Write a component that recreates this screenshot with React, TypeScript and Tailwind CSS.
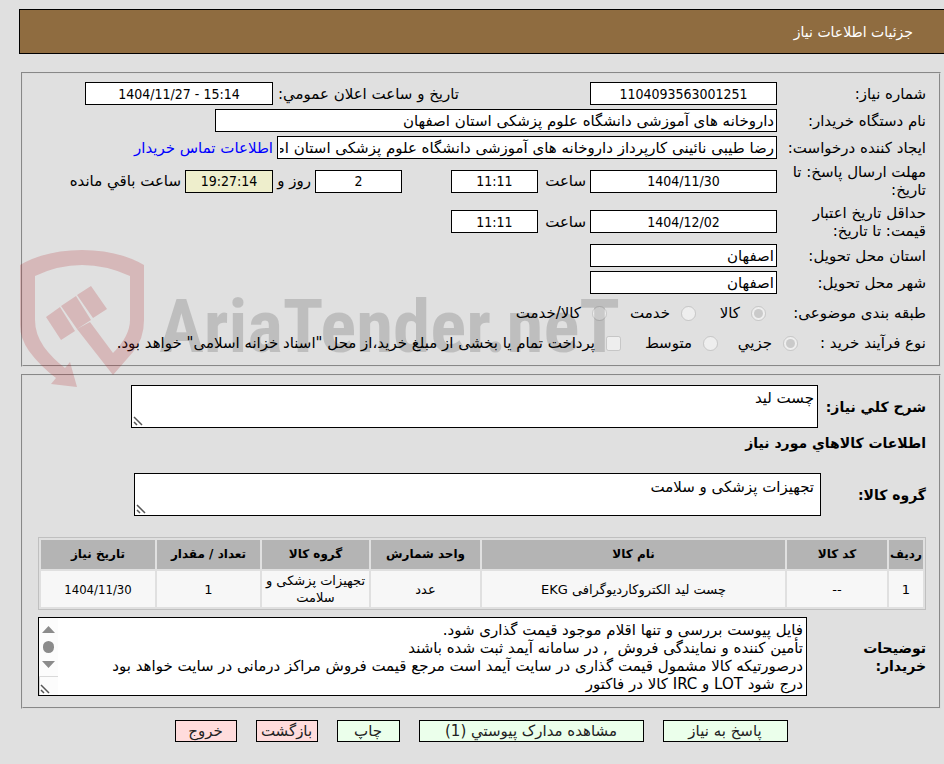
import type { ComponentProps, ReactNode } from "react";

const numeric = "font-['DejaVu_Sans_Condensed','DejaVu_Sans',sans-serif] text-[14px] text-center";

function Field({ className = "", ...props }: ComponentProps<"input">) {
  return (
    <input
      type="text"
      readOnly
      className={`h-[23px] shrink-0 border border-black px-[2px] leading-[18px] text-black outline-none ${className}`}
      {...props}
    />
  );
}

function Row({ id, label, className = "h-[27px]", children }: { id?: string; label: string; className?: string; children: ReactNode }) {
  return (
    <div className={`flex items-center ${className}`}>
      <label htmlFor={id} className="w-[149px] shrink-0 pe-2">
        {label}
      </label>
      {children}
    </div>
  );
}

function Choice({ label, className = "", ...props }: ComponentProps<"input"> & { label: string }) {
  return (
    <label className={`flex shrink-0 items-center gap-[11px] whitespace-nowrap ${className}`}>
      <input disabled className="m-0 size-[15px] shrink-0" {...props} />
      {label}
    </label>
  );
}

const panel = "min-w-0 border-2 border-[#dcdcdc] [border-style:groove]";

const columns = [
  { title: "ردیف", value: "1", width: "w-[34px]", cell: "" },
  { title: "کد کالا", value: "--", width: "w-[100px]", cell: "" },
  { title: "نام کالا", value: "چست لید الکتروکاردیوگرافی EKG", width: "", cell: "" },
  { title: "واحد شمارش", value: "عدد", width: "w-[109px]", cell: "" },
  { title: "گروه کالا", value: "تجهیزات پزشکی و سلامت", width: "w-[107px]", cell: "" },
  { title: "تعداد / مقدار", value: "1", width: "w-[103px]", cell: "" },
  { title: "تاریخ نیاز", value: "1404/11/30", width: "w-[114px]", cell: "font-['DejaVu_Sans_Condensed','DejaVu_Sans',sans-serif]" },
];

const notes = `فایل پیوست بررسی و تنها اقلام موجود قیمت گذاری شود.
تأمین کننده و نمایندگی فروش  , در سامانه آیمد ثبت شده باشند
درصورتیکه کالا مشمول قیمت گذاری در سایت آیمد است مرجع قیمت فروش مراکز درمانی در سایت خواهد بود
درج شود LOT و IRC کالا در فاکتور`;

const actions = [
  { label: "پاسخ به نياز", style: "w-[125px] bg-[#ebffeb]" },
  { label: "مشاهده مدارک پيوستي (1)", style: "w-[225px] bg-[#ebffeb]" },
  { label: "چاپ", style: "w-[63px] bg-[#ebffeb]" },
  { label: "بازگشت", style: "w-[62px] bg-[#ffdcdc]" },
  { label: "خروج", style: "w-[62px] bg-[#ffdcdc]" },
];

function Grip() {
  return (
    <svg className="pointer-events-none absolute bottom-[2px] left-[2px]" width="10" height="10" viewBox="0 0 10 10">
      <path d="M1 1 L9 9 M1 6 L4 9" fill="none" stroke="#555555" strokeWidth="1.5" />
    </svg>
  );
}

function Watermark() {
  return (
    <div aria-hidden="true" className="pointer-events-none absolute top-[176px] -left-px flex" dir="ltr">
      <svg width="126" height="140" viewBox="0 0 126 140" className="shrink-0" fill="#ae181c" fillOpacity="0.2">
        <path d="M0 17 Q26 2 62 2 Q98 2 124 17 L124 72 Q124 91 113 104 L93 127 L57 81 L70 74 L93 105 Q110 88 110 72 L110 28 Q86 17 62 17 Q38 17 15 28 L15 72 Q15 86 24 99 Q32 110 45 120 L50 114 L57 139 L31 136 L36 130 Q20 118 9 103 Q0 90 0 77 Z" />
        <path d="M71 38 L87 61 L73 70 L57 47 Z M56 48 L71 72 L57 81 L41 58 Z M40 59 L55 83 L41 92 L26 69 Z" />
      </svg>
      <span className="ms-[13px] mt-[30px] font-['Roboto_Condensed','Liberation_Sans_Narrow','Liberation_Sans',sans-serif] text-[75px] leading-[96px] font-bold whitespace-nowrap text-black/15">
        AriaTender.neT
      </span>
    </div>
  );
}

export default function App() {
  return (
    <main
      dir="rtl"
      className="min-h-screen overflow-x-hidden bg-[#e0e0e0] pt-[9px] pb-[21px] font-['DejaVu_Sans',sans-serif] text-[15px] leading-[18px] text-black"
    >
      <h1 className="me-[19px] flex h-[45px] items-center border-y border-e border-black bg-[#8f6c40] ps-[31px] text-[14px] text-white">
        جزئیات اطلاعات نیاز
      </h1>

      <div className="relative ms-[3px] me-[21px] mt-[18px]">
        <fieldset className={`${panel} h-[295px] ps-[13px] pe-[15px] pt-[6px]`}>
          <Row id="number" label="شماره نیاز:">
            <Field id="number" className={`w-[187px] bg-white ${numeric}`} defaultValue="1104093563001251" />
            <label htmlFor="announced" className="ms-[131px] w-[186px] shrink-0 whitespace-nowrap">
              تاریخ و ساعت اعلان عمومي:
            </label>
            <Field id="announced" dir="ltr" className={`w-[188px] bg-white ${numeric}`} defaultValue="1404/11/27 - 15:14" />
          </Row>
          <Row id="buyer" label="نام دستگاه خریدار:">
            <Field id="buyer" className="w-[562px] bg-white" defaultValue="داروخانه های آموزشی دانشگاه علوم پزشکی استان اصفهان" />
          </Row>
          <Row id="creator" label="ایجاد کننده درخواست:">
            <Field id="creator" className="w-[500px] bg-white" defaultValue="رضا طیبی نائینی کارپرداز داروخانه های آموزشی دانشگاه علوم پزشکی استان اصفهان" />
            <a href="#contact" className="ms-1 whitespace-nowrap text-[#0000ff]">
              اطلاعات تماس خریدار
            </a>
          </Row>
          <Row id="deadline" label="مهلت ارسال پاسخ: تا تاریخ:" className="h-[40px]">
            <Field id="deadline" className={`w-[187px] bg-white ${numeric}`} defaultValue="1404/11/30" />
            <label htmlFor="deadline-hour" className="w-[52px] shrink-0 ps-1">ساعت</label>
            <Field id="deadline-hour" className={`w-[87px] bg-white ${numeric}`} defaultValue="11:11" />
            <Field aria-label="روز" className={`ms-[49px] w-[87px] bg-white ${numeric}`} defaultValue="2" />
            <span className="w-[42px] shrink-0 ps-1">روز و</span>
            <Field id="remaining" className={`w-[88px] bg-[#eeeecc] ${numeric}`} defaultValue="19:27:14" />
            <label htmlFor="remaining" className="shrink-0 ps-1 whitespace-nowrap">ساعت باقي مانده</label>
          </Row>
          <Row id="validity" label="حداقل تاریخ اعتبار قیمت: تا تاریخ:" className="h-[41px]">
            <Field id="validity" className={`w-[187px] bg-white ${numeric}`} defaultValue="1404/12/02" />
            <label htmlFor="validity-hour" className="w-[52px] shrink-0 ps-1">ساعت</label>
            <Field id="validity-hour" className={`w-[87px] bg-white ${numeric}`} defaultValue="11:11" />
          </Row>
          <Row id="province" label="استان محل تحویل:">
            <Field id="province" className="w-[187px] bg-white" defaultValue="اصفهان" />
          </Row>
          <Row id="city" label="شهر محل تحویل:">
            <Field id="city" className="w-[187px] bg-white" defaultValue="اصفهان" />
          </Row>
          <div className="flex h-[34px] items-center">
            <span className="w-[160px] shrink-0">طبقه بندی موضوعی:</span>
            <Choice type="radio" name="subject" defaultChecked label="کالا" className="w-[70px]" />
            <Choice type="radio" name="subject" label="خدمت" className="w-[89px]" />
            <Choice type="radio" name="subject" label="کالا/خدمت" />
          </div>
          <div className="flex h-[26px] items-center">
            <span className="w-[128px] shrink-0">نوع فرآیند خرید :</span>
            <Choice type="radio" name="process" defaultChecked label="جزيي" className="w-[80px]" />
            <Choice type="radio" name="process" label="متوسط" className="w-[97px]" />
            <Choice type="checkbox" label={'پرداخت تمام یا بخشی از مبلغ خرید،از محل "اسناد خزانه اسلامی" خواهد بود.'} />
          </div>
        </fieldset>

        <fieldset className={`${panel} mt-[7px] ps-[13px] pe-[15px] pt-[9px] pb-[11px]`}>
          <div className="flex items-center">
            <label htmlFor="summary" className="w-[108px] shrink-0 text-[14px] font-bold whitespace-nowrap">شرح کلي نياز:</label>
            <div className="relative min-w-0 grow">
              <textarea id="summary" readOnly defaultValue="چست لید" className="block h-[43px] w-full resize-none overflow-hidden border border-black bg-white p-[3px] outline-none" />
              <Grip />
            </div>
            <span className="w-[93px] shrink-0" />
          </div>
          <h2 className="mt-[6px] text-[14px] font-bold">اطلاعات کالاهاي مورد نياز</h2>
          <div className="mt-[21px] flex items-center">
            <label htmlFor="group" className="w-[105px] shrink-0 text-[14px] font-bold">گروه کالا:</label>
            <div className="relative min-w-0 grow">
              <textarea id="group" readOnly defaultValue="تجهیزات پزشکی و سلامت" className="block h-[43px] w-full resize-none overflow-hidden border border-black bg-white px-[6px] py-[4px] outline-none" />
              <Grip />
            </div>
            <span className="w-[96px] shrink-0" />
          </div>

          <table className="mt-[21px] w-full table-fixed border-separate border-spacing-[2px] border border-[#c0c0c0] text-center text-[12px] leading-[17px]">
            <thead>
              <tr className="h-[29px] bg-[#b4b4b4]">
                {columns.map((column) => (
                  <th key={column.title} scope="col" className={`p-0 font-bold whitespace-nowrap ${column.width}`}>
                    {column.title}
                  </th>
                ))}
              </tr>
            </thead>
            <tbody>
              <tr className="h-[36px] bg-[#f7f7f7]">
                {columns.map((column) => (
                  <td key={column.title} className={`p-0 text-[13px] ${column.cell}`}>
                    {column.value}
                  </td>
                ))}
              </tr>
            </tbody>
          </table>

          <div className="mt-[7px] flex items-center">
            <label htmlFor="notes" className="w-[119px] shrink-0 pe-[40px] text-[14px] font-bold">توضیحات خریدار:</label>
            <div className="relative min-w-0 grow">
              <textarea id="notes" readOnly defaultValue={notes} className="block h-[79px] w-full resize-none overflow-hidden border border-black bg-white py-[3px] ps-[3px] pe-[20px] outline-none" />
              <svg className="absolute top-px left-px" width="19" height="77" viewBox="0 0 19 77">
                <rect width="19" height="77" fill="#fcfcfc" />
                <path d="M3 15 L9.500 8 L16 15 Z M3 43 L16 43 L9.500 50 Z" fill="#8b8b8b" />
                <rect x="4" y="23" width="11" height="12" rx="5.500" fill="#8b8b8b" />
                <path d="M0.500 77 V58.500 H19" fill="none" stroke="#d9d9d9" />
              </svg>
              <Grip />
            </div>
          </div>
        </fieldset>

        <Watermark />
      </div>

      <div className="ms-[3px] me-[21px] mt-[11px] flex justify-center gap-[19px]">
        {actions.map((action) => (
          <button key={action.label} type="button" className={`h-[22px] border border-black whitespace-nowrap text-[#222222] ${action.style}`}>
            {action.label}
          </button>
        ))}
      </div>
    </main>
  );
}
